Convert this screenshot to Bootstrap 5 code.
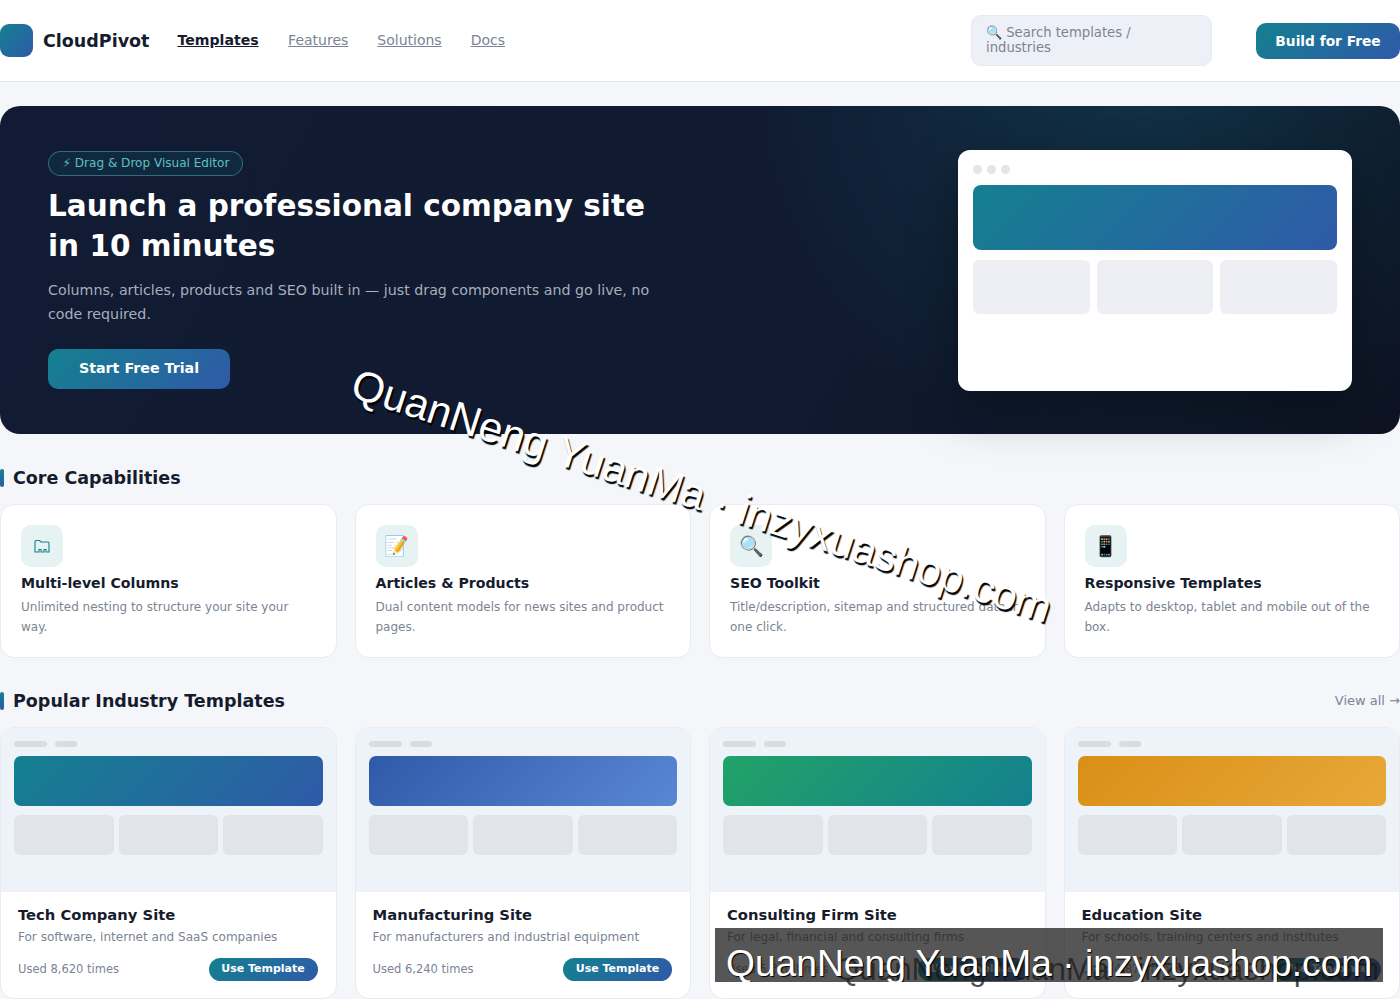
<!DOCTYPE html>
<html lang="en">
<head>
    <meta charset="UTF-8">
    <meta name="viewport" content="width=device-width, initial-scale=1.0">
    <title>CloudPivot - Templates</title>
    <link href="https://cdn.jsdelivr.net/npm/bootstrap@5.3.0/dist/css/bootstrap.min.css" rel="stylesheet">
    <style>
        body {
            font-family: "DejaVu Sans", sans-serif;
            background-color: #f4f6fa;
            color: #161c2d;
            overflow-x: hidden;
        }
        .top-bar {
            background: #fff;
            border-bottom: 1px solid #e4e8ee;
            height: 82px;
            padding: 0;
        }
        .logo-box {
            width: 33px;
            height: 33px;
            border-radius: 9px;
            background: linear-gradient(135deg, #148090, #2f5aa8);
        }
        .brand-name {
            font-size: 17.5px;
            font-weight: 700;
            color: #161c2d;
            margin-left: 10px;
            margin-right: 28px;
            padding: 1px 0 0;
        }
        .top-link {
            font-size: 14px;
            color: #7b8494;
            margin-right: 29px;
        }
        .top-link.is-active {
            color: #161c2d;
            font-weight: 700;
            font-size: 14.1px;
            margin-right: 29.5px;
        }
        .search-box {
            width: 241px;
            height: 51px;
            margin-right: 44px;
            padding: 9px 14px;
            font-size: 13.2px;
            line-height: 15px;
            color: #7b8494;
            background: #edf0f6;
            border: 1px solid #e6e9ef;
            border-radius: 10px;
        }
        .grad-btn {
            background: linear-gradient(135deg, #148090, #2f5aa8);
            border: 0;
            color: #fff;
            font-weight: 700;
        }
        .build-btn {
            width: 144px;
            height: 36px;
            padding: 1px 0 0;
            font-size: 13.75px;
            border-radius: 10px;
        }
        .hero-box {
            height: 328px;
            margin-top: 24px;
            padding: 44px 48px 0;
            border-radius: 20px;
            background:
                radial-gradient(circle at 82% -10%, rgba(20, 128, 144, .25), transparent 34%),
                linear-gradient(120deg, #111b33 0%, #101a30 60%, #0d1322 100%);
        }
        .hero-tag {
            display: inline-block;
            height: 25px;
            margin-top: 1px;
            padding: 0 13px 0 13.5px;
            font-size: 12.05px;
            line-height: 23px;
            color: #5cc0c4;
            background: rgba(20, 128, 144, .14);
            border: 1px solid rgba(92, 192, 196, .45);
            border-radius: 13px;
        }
        .hero-title {
            width: 610px;
            margin: 10px 0 0;
            font-size: 29.5px;
            font-weight: 700;
            line-height: 40px;
            color: #fff;
        }
        .hero-text {
            width: 620px;
            margin: 12px 0 0;
            font-size: 14.22px;
            line-height: 24px;
            color: #a6afbd;
        }
        .trial-btn {
            width: 182px;
            height: 40px;
            margin-top: 23px;
            padding: 0;
            font-size: 14.25px;
            border-radius: 10px;
        }
        .mock-window {
            width: 394px;
            height: 241px;
            padding: 15px;
            background: #fff;
            border-radius: 12px;
            box-shadow: 0 20px 50px rgba(0, 0, 0, .35);
        }
        .mock-dot {
            width: 9px;
            height: 9px;
            border-radius: 50%;
            background: #e3e5e8;
        }
        .mock-banner {
            height: 65px;
            margin-top: 11px;
            border-radius: 8px;
            background: linear-gradient(135deg, #148090, #2f5aa8);
        }
        .mock-row {
            margin-top: 10px;
            gap: 7px;
        }
        .mock-tile {
            flex: 1;
            height: 54px;
            border-radius: 6px;
            background: #edeff4;
        }
        .sect-head {
            margin: 0;
            padding-left: 13px;
            font-size: 17.5px;
            font-weight: 700;
            line-height: 24px;
            position: relative;
        }
        .sect-head::before {
            content: "";
            position: absolute;
            left: 0;
            top: 3px;
            width: 4px;
            height: 18px;
            border-radius: 2px;
            background: linear-gradient(180deg, #148090, #2f5aa8);
        }
        .tight-row {
            --bs-gutter-x: 18px;
            margin-left: -9px;
            margin-right: -9px;
        }
        .feat-card {
            height: 154px;
            padding: 20px;
            border: 1px solid #e8ebf0;
            border-radius: 14px;
        }
        .feat-icon {
            width: 42px;
            height: 42px;
            border-radius: 10px;
            background: #e7f3f3;
            font-size: 20px;
            color: #148090;
        }
        .feat-title {
            margin: 6px 0 0;
            font-size: 14.15px;
            font-weight: 700;
            line-height: 20px;
        }
        .feat-text {
            margin: 4px 0 0;
            font-size: 12px;
            line-height: 20px;
            color: #7b8494;
        }
        .view-all {
            font-size: 13px;
            color: #7b8494;
            text-decoration: none;
        }
        .tpl-card {
            height: 272px;
            overflow: hidden;
            border: 1px solid #e8ebf0;
            border-radius: 14px;
        }
        .tpl-thumb {
            height: 164px;
            padding: 13px 13px 0;
            background: #eef3f9;
        }
        .tpl-pill {
            height: 6px;
            border-radius: 3px;
            background: #d9dde3;
        }
        .tpl-banner {
            height: 50px;
            margin-top: 9px;
            border-radius: 7px;
        }
        .grad-teal { background: linear-gradient(135deg, #148090, #2f5aa8); }
        .grad-blue { background: linear-gradient(135deg, #2f5aa8, #5a86d6); }
        .grad-green { background: linear-gradient(135deg, #21a366, #148090); }
        .grad-amber { background: linear-gradient(135deg, #d98f17, #e8a838); }
        .tpl-row {
            margin-top: 9px;
            gap: 5px;
        }
        .tpl-tile {
            flex: 1;
            height: 40px;
            border-radius: 6px;
            background: #e1e4e9;
        }
        .tpl-body {
            padding: 12px 17px 0;
        }
        .tpl-title {
            margin: 0;
            font-size: 14.75px;
            font-weight: 700;
            line-height: 22px;
        }
        .tpl-text {
            margin: 1px 0 0;
            font-size: 12.05px;
            line-height: 20px;
            color: #7b8494;
        }
        .tpl-meta {
            margin-top: 11px;
        }
        .tpl-used {
            font-size: 11.5px;
            color: #7b8494;
        }
        .use-btn {
            width: 109px;
            height: 23px;
            padding: 0;
            margin-right: 1px;
            font-size: 11px;
            border-radius: 12px;
        }
        .stamp-tilt, .stamp-ghost, .stamp-text {
            font-family: "Liberation Sans", sans-serif;
            white-space: nowrap;
        }
        .stamp-tilt {
            position: absolute;
            left: 353px;
            top: 360px;
            font-size: 42.2px;
            line-height: 46px;
            color: #fff;
            transform: rotate(18deg);
            transform-origin: 0 50%;
            text-shadow: 2px 2px 1px #000;
        }
        .stamp-strip {
            position: absolute;
            left: 715px;
            top: 928px;
            width: 668px;
            height: 54px;
            background: rgba(30, 30, 30, .75);
            overflow: hidden;
        }
        .stamp-text {
            position: absolute;
            left: 11px;
            top: 12px;
            font-size: 37.2px;
            line-height: 46px;
            color: #fff;
            text-shadow: 1px 1px 1px #000;
        }
        .stamp-ghost {
            position: absolute;
            left: 835px;
            top: 951px;
            font-size: 31.3px;
            line-height: 38px;
            color: rgba(0, 0, 0, .7);
        }
    </style>
</head>
<body>
    <nav class="navbar top-bar">
        <div class="d-flex align-items-center w-100">
            <div class="logo-box"></div>
            <a class="navbar-brand brand-name" href="#">CloudPivot</a>
            <a class="top-link is-active" href="#">Templates</a>
            <a class="top-link" href="#">Features</a>
            <a class="top-link" href="#">Solutions</a>
            <a class="top-link" href="#">Docs</a>
            <div class="search-box ms-auto">🔍 Search templates / industries</div>
            <button class="btn grad-btn build-btn">Build for Free</button>
        </div>
    </nav>

    <section class="hero-box d-flex justify-content-between">
        <div>
            <span class="hero-tag">⚡ Drag &amp; Drop Visual Editor</span>
            <h1 class="hero-title">Launch a professional company site in 10 minutes</h1>
            <p class="hero-text">Columns, articles, products and SEO built in — just drag components and go live, no code required.</p>
            <button class="btn grad-btn trial-btn">Start Free Trial</button>
        </div>
        <div class="mock-window">
            <div class="d-flex" style="gap: 5px">
                <div class="mock-dot"></div><div class="mock-dot"></div><div class="mock-dot"></div>
            </div>
            <div class="mock-banner"></div>
            <div class="d-flex mock-row">
                <div class="mock-tile"></div><div class="mock-tile"></div><div class="mock-tile"></div>
            </div>
        </div>
    </section>

    <h2 class="sect-head" style="margin-top: 32px">Core Capabilities</h2>
    <div class="row tight-row" style="margin-top: 14px">
        <div class="col-3">
            <div class="card feat-card">
                <div class="feat-icon d-flex flex-shrink-0 align-items-center justify-content-center">
                    <svg width="16" height="14" viewBox="0 0 16 14" fill="none" stroke="#148090" stroke-width="1.1">
                        <path d="M1 13V2.5Q1 1.5 2 1.5H5.5L7 3H14Q15 3 15 4V13H12V10.5H10V13H7V10.5H5V13Z"/>
                    </svg>
                </div>
                <h3 class="feat-title">Multi-level Columns</h3>
                <p class="feat-text">Unlimited nesting to structure your site your way.</p>
            </div>
        </div>
        <div class="col-3">
            <div class="card feat-card">
                <div class="feat-icon d-flex flex-shrink-0 align-items-center justify-content-center">📝</div>
                <h3 class="feat-title">Articles &amp; Products</h3>
                <p class="feat-text">Dual content models for news sites and product pages.</p>
            </div>
        </div>
        <div class="col-3">
            <div class="card feat-card">
                <div class="feat-icon d-flex flex-shrink-0 align-items-center justify-content-center">🔍</div>
                <h3 class="feat-title">SEO Toolkit</h3>
                <p class="feat-text">Title/description, sitemap and structured data in one click.</p>
            </div>
        </div>
        <div class="col-3">
            <div class="card feat-card">
                <div class="feat-icon d-flex flex-shrink-0 align-items-center justify-content-center">📱</div>
                <h3 class="feat-title">Responsive Templates</h3>
                <p class="feat-text">Adapts to desktop, tablet and mobile out of the box.</p>
            </div>
        </div>
    </div>

    <div class="d-flex justify-content-between align-items-center" style="margin-top: 31px">
        <h2 class="sect-head">Popular Industry Templates</h2>
        <a class="view-all" href="#">View all →</a>
    </div>
    <div class="row tight-row" style="margin-top: 14px" id="tplRow"></div>

    <div class="stamp-tilt">QuanNeng YuanMa · inzyxuashop.com</div>
    <div class="stamp-ghost">QuanNeng YuanMa · inzyxuashop.com</div>
    <div class="stamp-strip"><div class="stamp-text">QuanNeng YuanMa · inzyxuashop.com</div></div>

    <script src="https://cdn.jsdelivr.net/npm/bootstrap@5.3.0/dist/js/bootstrap.bundle.min.js"></script>
    <script>
        const templates = [
            { name: 'Tech Company Site', text: 'For software, internet and SaaS companies', used: '8,620', grad: 'grad-teal' },
            { name: 'Manufacturing Site', text: 'For manufacturers and industrial equipment', used: '6,240', grad: 'grad-blue' },
            { name: 'Consulting Firm Site', text: 'For legal, financial and consulting firms', used: '5,310', grad: 'grad-green' },
            { name: 'Education Site', text: 'For schools, training centers and institutes', used: '4,870', grad: 'grad-amber' }
        ];
        document.getElementById('tplRow').innerHTML = templates.map(t => `
            <div class="col-3">
                <div class="card tpl-card">
                    <div class="tpl-thumb">
                        <div class="d-flex gap-2">
                            <div class="tpl-pill" style="width: 33px"></div>
                            <div class="tpl-pill" style="width: 22px"></div>
                        </div>
                        <div class="tpl-banner ${t.grad}"></div>
                        <div class="d-flex tpl-row">
                            <div class="tpl-tile"></div><div class="tpl-tile"></div><div class="tpl-tile"></div>
                        </div>
                    </div>
                    <div class="tpl-body">
                        <h3 class="tpl-title">${t.name}</h3>
                        <p class="tpl-text">${t.text}</p>
                        <div class="d-flex justify-content-between align-items-center tpl-meta">
                            <span class="tpl-used">Used ${t.used} times</span>
                            <button class="btn grad-btn use-btn">Use Template</button>
                        </div>
                    </div>
                </div>
            </div>`).join('');
    </script>
</body>
</html>
